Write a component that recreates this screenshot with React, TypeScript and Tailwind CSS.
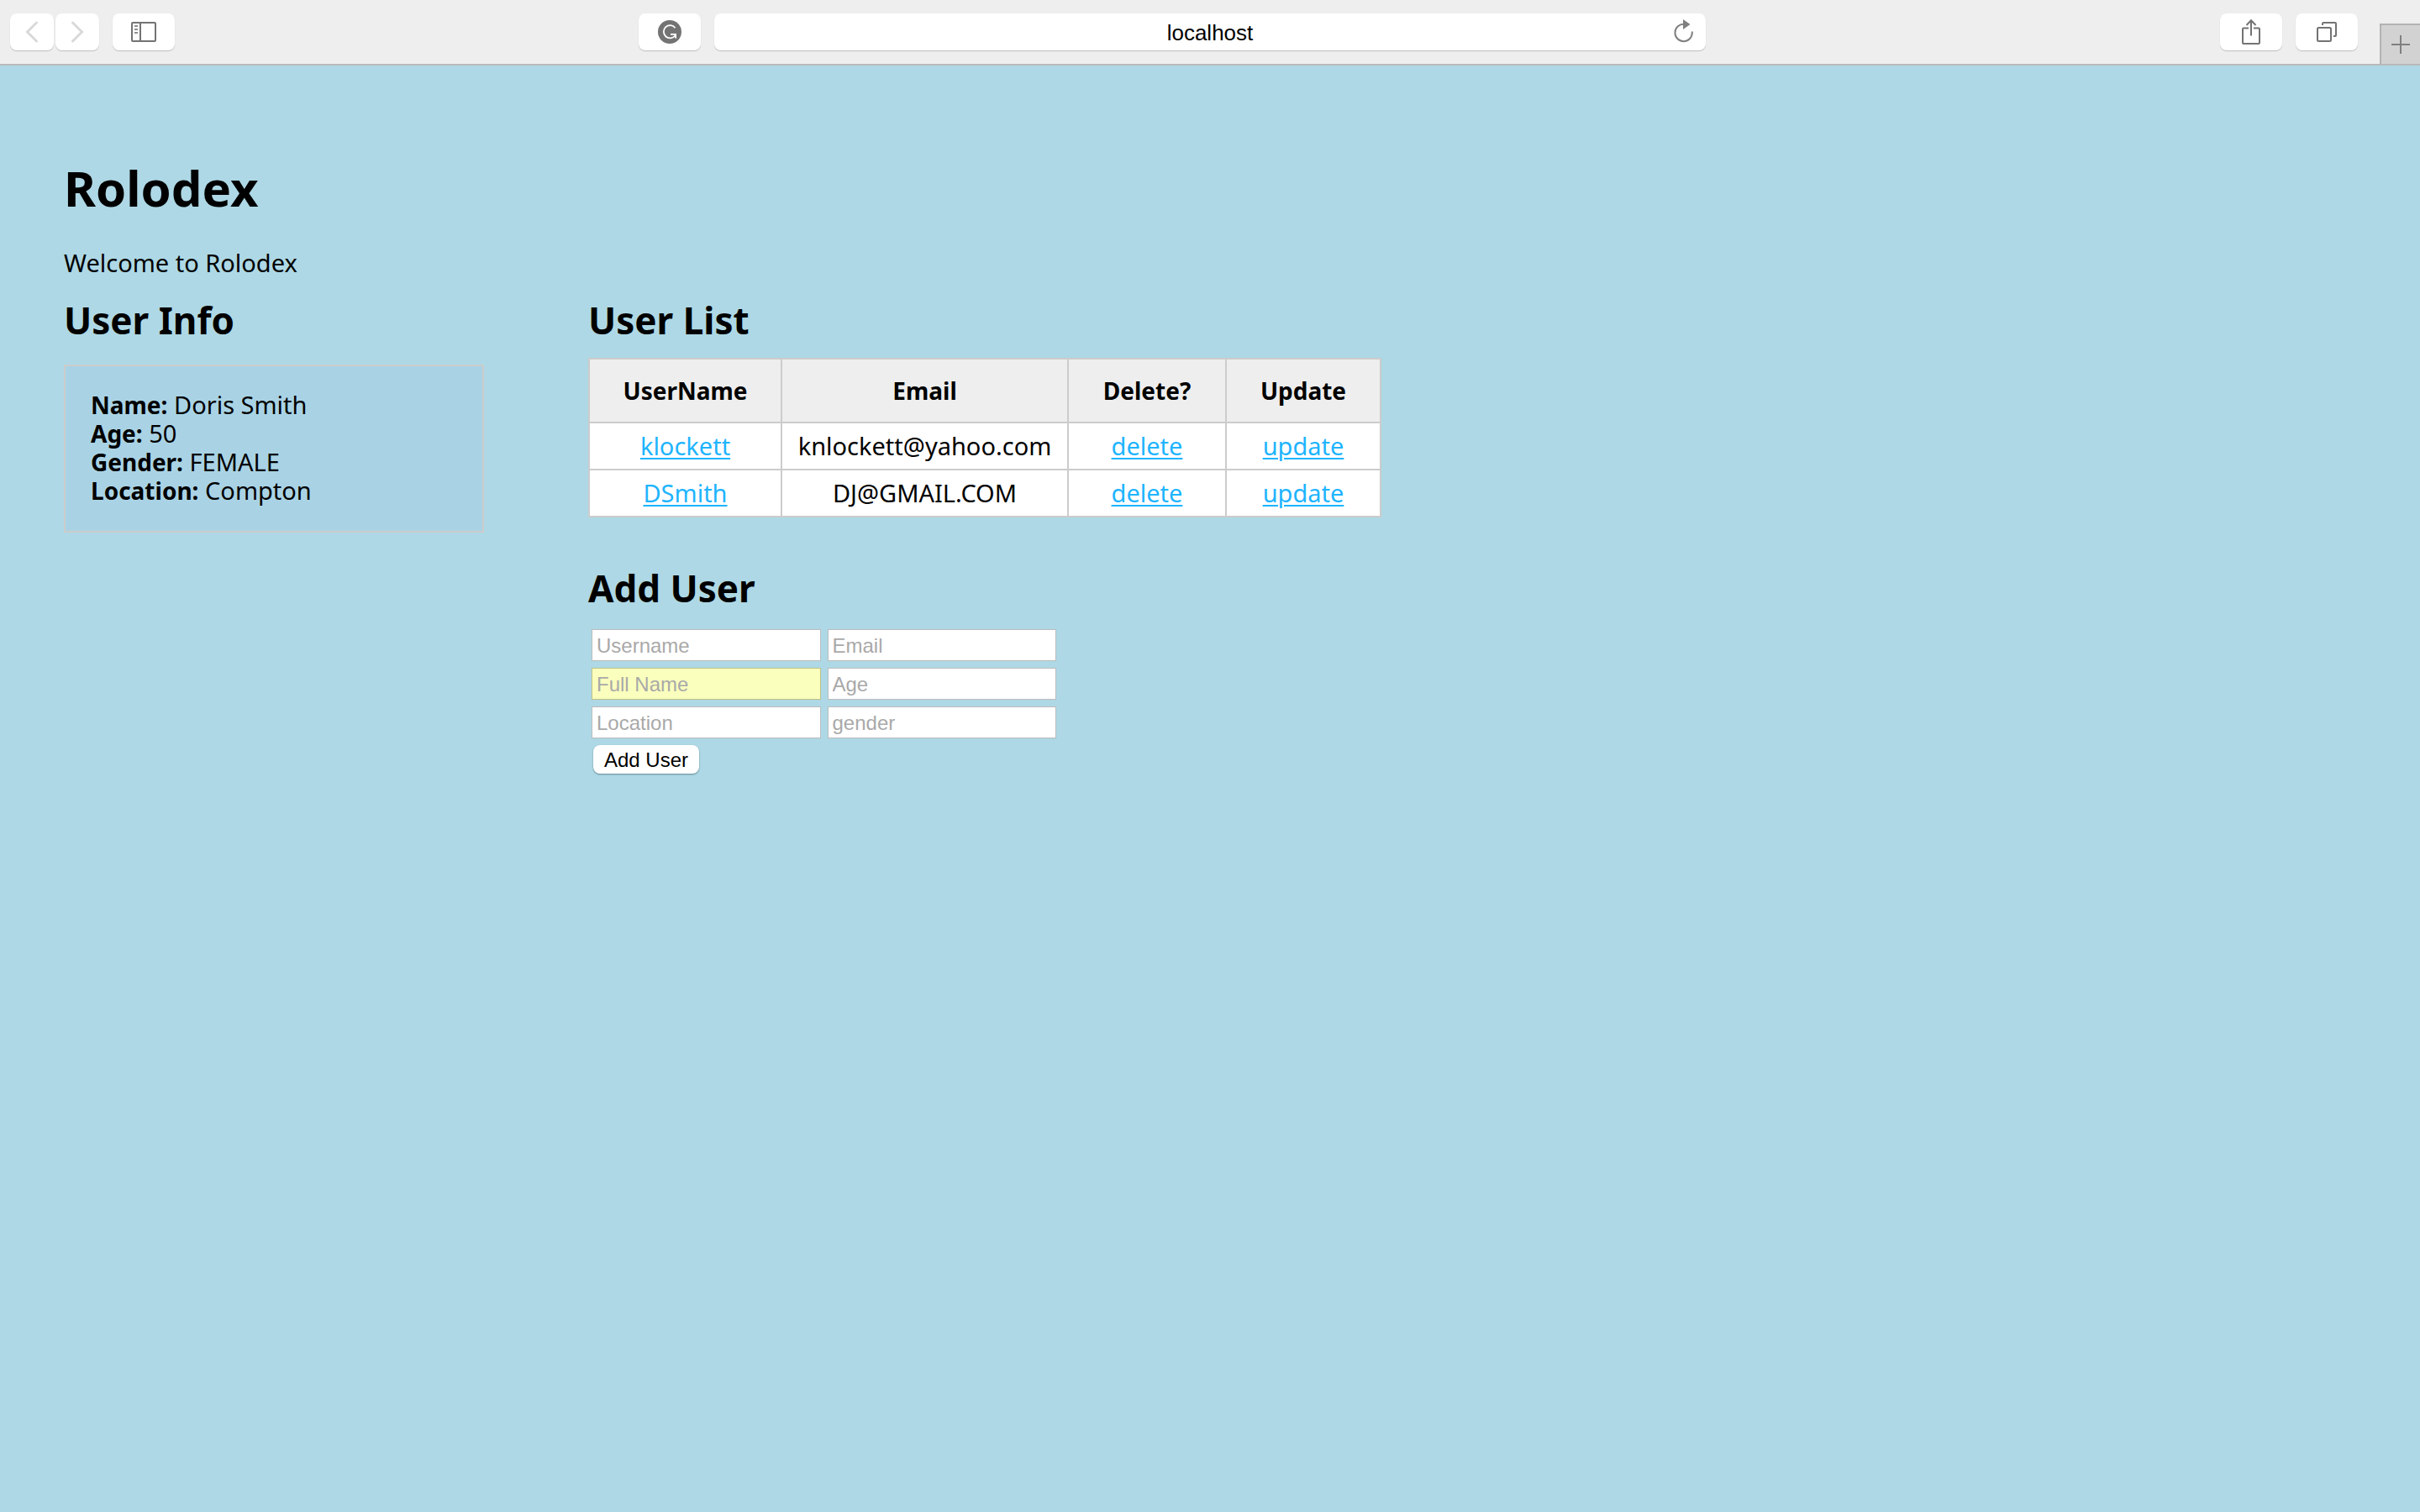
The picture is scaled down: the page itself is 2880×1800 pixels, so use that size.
import type { ReactNode } from 'react';

const users = [
  { username: 'klockett', email: 'knlockett@yahoo.com' },
  { username: 'DSmith', email: 'DJ@GMAIL.COM' },
];

const info = [
  { label: 'Name:', value: 'Doris Smith' },
  { label: 'Age:', value: '50' },
  { label: 'Gender:', value: 'FEMALE' },
  { label: 'Location:', value: 'Compton' },
];

const fields = [
  { name: 'username', label: 'Username' },
  { name: 'email', label: 'Email' },
  { name: 'fullname', label: 'Full Name', filled: true },
  { name: 'age', label: 'Age' },
  { name: 'location', label: 'Location' },
  { name: 'gender', label: 'gender' },
];

function ToolButton({ label, narrow, children }: { label: string; narrow?: boolean; children: ReactNode }) {
  return (
    <button
      type="button"
      aria-label={label}
      className={`flex h-11 items-center justify-center rounded-lg bg-white shadow-[0_1px_1px_#bdbdbd] ${narrow ? 'w-[52px]' : 'w-[74px]'}`}
    >
      {children}
    </button>
  );
}

function Toolbar() {
  return (
    <header className="flex items-start border-b-2 border-[#b9b9b9] bg-[#eeeeee] font-['Liberation_Sans',sans-serif]">
      <div className="flex w-[29.5%] items-center py-4 pr-4 pl-3">
        <div className="flex gap-0.5">
          <ToolButton label="Back" narrow>
            <svg width="16" height="26" viewBox="0 0 16 26" fill="none" stroke="#d9d9d9" strokeWidth="3" strokeLinecap="round">
              <path d="M13.500 2 L2.500 13 L13.500 24" />
            </svg>
          </ToolButton>
          <ToolButton label="Forward" narrow>
            <svg width="16" height="26" viewBox="0 0 16 26" fill="none" stroke="#d9d9d9" strokeWidth="3" strokeLinecap="round">
              <path d="M2.500 2 L13.500 13 L2.500 24" />
            </svg>
          </ToolButton>
        </div>
        <div className="ml-4">
          <ToolButton label="Sidebar">
            <svg width="30" height="24" viewBox="0 0 30 24" fill="none" stroke="#737373" strokeWidth="2">
              <rect x="1" y="1" width="28" height="22" rx="1" />
              <path d="M11 1V23" />
              <path d="M4 5H8M4 9H8M4 13H8" stroke="#8f8f8f" />
            </svg>
          </ToolButton>
        </div>
        <div className="ml-auto">
          <ToolButton label="Grammarly">
            <svg width="28" height="28" viewBox="0 0 28 28" fill="none">
              <circle cx="14" cy="14" r="14" fill="#737373" />
              <path d="M20.500 9.200 A7.600 7.600 0 1 0 20.600 18.200" stroke="#fff" strokeWidth="1.800" />
              <path d="M15 16.800H21" stroke="#fff" strokeWidth="1.800" />
              <path d="M16.500 15.900H22V22.200L20.200 21V17.800Z" fill="#fff" />
            </svg>
          </ToolButton>
        </div>
      </div>
      <div className="mt-4 flex h-11 w-[41%] items-center rounded-lg bg-white pr-3 pl-12 shadow-[0_1px_1px_#bdbdbd]">
        <input
          type="text"
          aria-label="Address"
          defaultValue="localhost"
          className="min-w-0 flex-1 bg-transparent pt-0.5 text-center text-[26px] leading-8 text-black outline-none"
        />
        <button type="button" aria-label="Reload" className="flex w-9 justify-end">
          <svg width="28" height="30" viewBox="0 0 28 30" fill="none">
            <path d="M23.800 14.500 V16 A10.200 10.200 0 1 1 14 5.800" stroke="#808080" strokeWidth="2" />
            <path d="M13 0 L21.500 6 L13 12 Z" fill="#808080" />
          </svg>
        </button>
      </div>
      <div className="flex w-[29.5%] justify-end self-stretch">
        <div className="flex gap-4 py-4 pr-[26px]">
          <ToolButton label="Share">
            <svg width="22" height="32" viewBox="0 0 22 32" fill="none" stroke="#737373" strokeWidth="2">
              <path d="M8 11.500H2Q1 11.500 1 12.500V29Q1 30 2 30H20Q21 30 21 29V12.500Q21 11.500 20 11.500H14" />
              <path d="M11 20.500V2.500M5.500 8L11 2.200L16.500 8" />
            </svg>
          </ToolButton>
          <ToolButton label="Show all tabs">
            <svg width="24" height="24" viewBox="0 0 24 24" fill="none" stroke="#737373" strokeWidth="2">
              <rect x="1" y="7" width="16" height="16" rx="1.500" />
              <path d="M7 4V2Q7 1 8 1H22Q23 1 23 2V16Q23 17 22 17H20" />
            </svg>
          </ToolButton>
        </div>
        <button
          type="button"
          aria-label="New tab"
          className="flex h-12 w-12 items-center justify-center self-end border-t-2 border-l-2 border-[#b3b3b3] bg-[#d2d2d2]"
        >
          <svg width="22" height="22" viewBox="0 0 22 22" stroke="#808080" strokeWidth="2">
            <path d="M11 0V22M0 11H22" />
          </svg>
        </button>
      </div>
    </header>
  );
}

function SectionTitle({ children }: { children: ReactNode }) {
  return <h2 className="text-[44px] leading-[50px] font-bold">{children}</h2>;
}

function Cell({ children }: { children: ReactNode }) {
  return <td className="h-14 border-2 border-[#cccccc] p-0">{children}</td>;
}

function Link({ children }: { children: ReactNode }) {
  return (
    <a href="#" className="text-[#1eb4ff] underline decoration-2 underline-offset-3">
      {children}
    </a>
  );
}

export default function App() {
  return (
    <div className="flex min-h-screen flex-col bg-[#aed8e5] text-black">
      <Toolbar />
      <main className="px-[76px] pt-[114px] font-['Noto_Sans',sans-serif] text-[29px] leading-[34px]">
        <h1 className="text-[58px] leading-[64px] font-bold">Rolodex</h1>
        <p className="mt-10">Welcome to Rolodex</p>
        <div className="mt-[26px] flex items-start gap-[124px]">
          <section className="w-[500px]">
            <SectionTitle>User Info</SectionTitle>
            <div className="mt-7 border-2 border-[#cccccc] bg-[#a9d3e5] px-[30px] pt-[29px] pb-[31px]">
              {info.map((row) => (
                <p key={row.label}>
                  <strong className="text-[28px] leading-none font-bold">{row.label}</strong> {row.value}
                </p>
              ))}
            </div>
          </section>
          <section>
            <SectionTitle>User List</SectionTitle>
            <table className="mt-5 w-[944px] table-fixed border-collapse bg-white text-center">
              <colgroup>
                <col className="w-[229px]" />
                <col className="w-[341px]" />
                <col className="w-[188px]" />
                <col className="w-[184px]" />
              </colgroup>
              <thead className="bg-[#eeeeee]">
                <tr>
                  {['UserName', 'Email', 'Delete?', 'Update'].map((title) => (
                    <th key={title} scope="col" className="h-[76px] border-2 border-[#cccccc] p-0 text-[28px] font-bold">
                      {title}
                    </th>
                  ))}
                </tr>
              </thead>
              <tbody>
                {users.map((user) => (
                  <tr key={user.username}>
                    <Cell>
                      <Link>{user.username}</Link>
                    </Cell>
                    <Cell>{user.email}</Cell>
                    <Cell>
                      <Link>delete</Link>
                    </Cell>
                    <Cell>
                      <Link>update</Link>
                    </Cell>
                  </tr>
                ))}
              </tbody>
            </table>
            <div className="mt-[59px]">
              <SectionTitle>Add User</SectionTitle>
            </div>
            <form className="mt-6 ml-1 font-['Liberation_Sans',sans-serif]" onSubmit={(e) => e.preventDefault()}>
              <div className="grid w-[553px] grid-cols-2 gap-2">
                {fields.map((field) => (
                  <input
                    key={field.name}
                    type="text"
                    name={field.name}
                    aria-label={field.label}
                    placeholder={field.label}
                    className={`h-[38px] min-w-0 border px-[5px] pt-0.5 text-[24px] leading-7 text-black placeholder:text-[#a9a9a9] ${
                      field.filled ? 'border-[#bfc184] bg-[#faffbd]' : 'border-[#bcbcbc] bg-white'
                    }`}
                  />
                ))}
              </div>
              <button
                type="submit"
                className="mt-2 ml-0.5 flex h-[34px] w-[126px] items-center justify-center rounded-lg bg-white pt-0.5 text-[24px] leading-7 text-black shadow-[0_1px_2px_#5f8791]"
              >
                Add User
              </button>
            </form>
          </section>
        </div>
      </main>
    </div>
  );
}
